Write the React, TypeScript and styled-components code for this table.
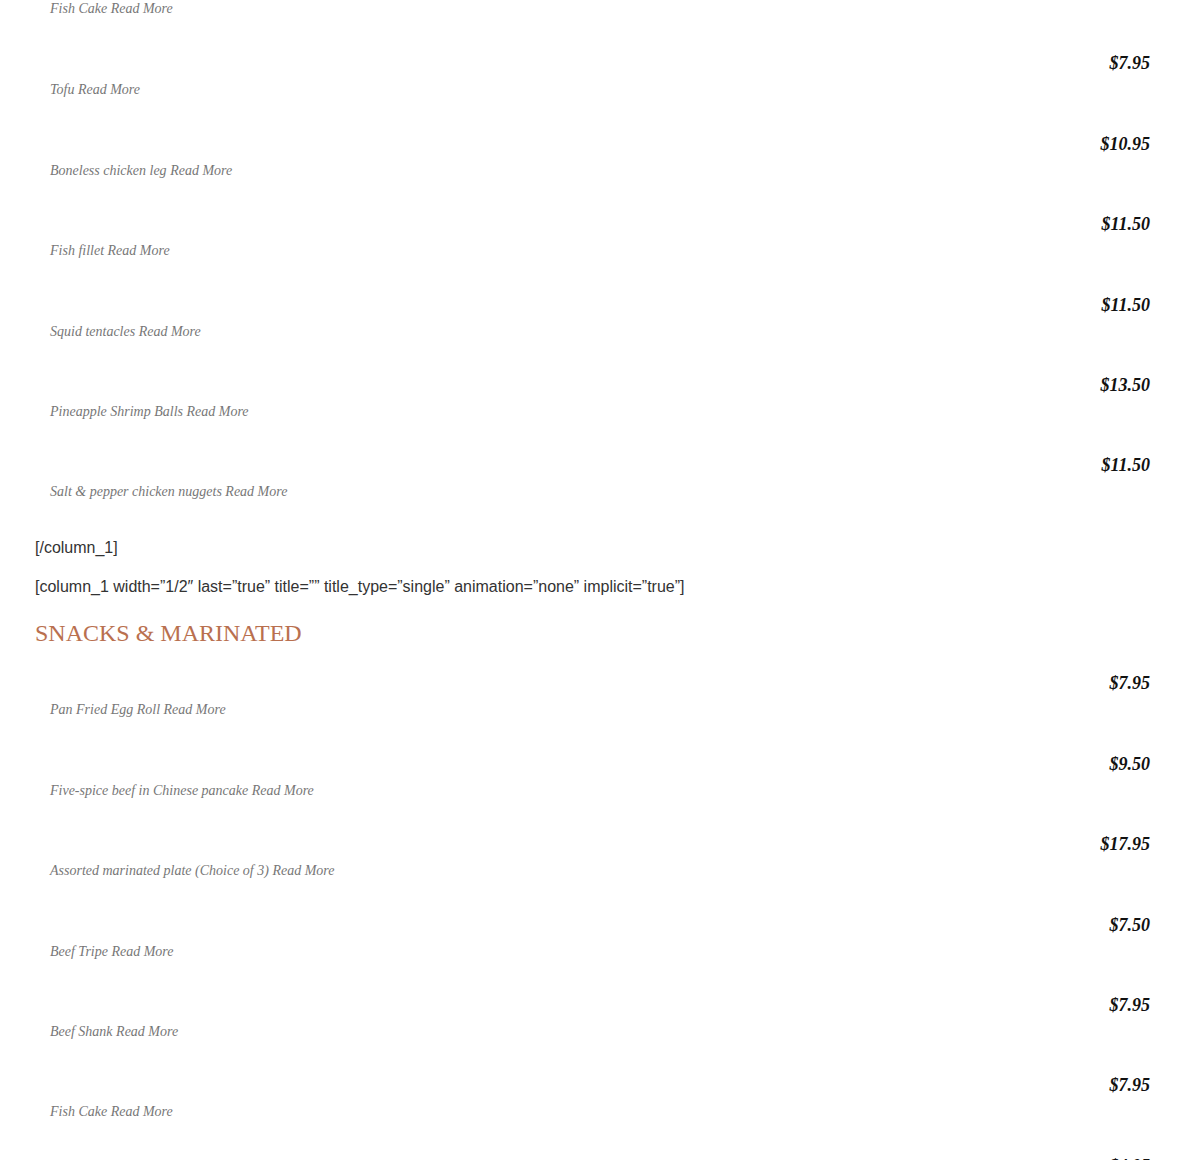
import React from "react";
import styled, { createGlobalStyle } from "styled-components";

const GlobalStyle = createGlobalStyle`
  html, body { margin: 0; padding: 0; background: #ffffff; }
  body { font-family: "Liberation Serif", serif; overflow: hidden; }
`;

const Page = styled.div`
  padding: 0 40px 0 35px;
  width: 1190px;
  box-sizing: border-box;
  height: 1160px;
  overflow: hidden;
`;

const List = styled.div`
  display: flex;
  flex-direction: column;
  gap: 31.4px;
`;

const Item = styled.div`
  display: flex;
  flex-direction: column;
`;

const Price = styled.div`
  text-align: right;
  font-family: "Liberation Serif", serif;
  font-style: italic;
  font-weight: 700;
  font-size: 18px;
  line-height: 24px;
  color: #111111;
`;

const Name = styled.div<{ $lead?: boolean }>`
  padding-left: 15px;
  margin-top: ${(p) => (p.$lead ? "-1px" : "5px")};
  margin-bottom: ${(p) => (p.$lead ? "1px" : "0")};
  font-family: "Liberation Serif", serif;
  font-style: italic;
  font-size: 14px;
  line-height: 20px;
  color: #777777;
`;

const Shortcode = styled.p<{ $top: number }>`
  margin: ${(p) => p.$top}px 0 0;
  font-family: "Liberation Sans", Arial, sans-serif;
  font-size: 16px;
  line-height: 24px;
  color: #333333;
`;

const Heading = styled.h2`
  margin: 19px 0 23px;
  font-family: "Liberation Serif", serif;
  font-weight: 400;
  font-size: 24px;
  line-height: 30px;
  color: #b9704f;
  text-transform: uppercase;
`;

type Dish = { name?: string; price: string };

const first: Dish[] = [
  { name: "Tofu", price: "$7.95" },
  { name: "Boneless chicken leg", price: "$10.95" },
  { name: "Fish fillet", price: "$11.50" },
  { name: "Squid tentacles", price: "$11.50" },
  { name: "Pineapple Shrimp Balls", price: "$13.50" },
  { name: "Salt & pepper chicken nuggets", price: "$11.50" },
];

const second: Dish[] = [
  { name: "Pan Fried Egg Roll", price: "$7.95" },
  { name: "Five-spice beef in Chinese pancake", price: "$9.50" },
  { name: "Assorted marinated plate (Choice of 3)", price: "$17.95" },
  { name: "Beef Tripe", price: "$7.50" },
  { name: "Beef Shank", price: "$7.95" },
  { name: "Fish Cake", price: "$7.95" },
  { price: "$4.95" },
];

const MenuItem = ({ d }: { d: Dish }) => (
  <Item>
    <Price>{d.price}</Price>
    {d.name && <Name>{d.name} Read More</Name>}
  </Item>
);

export default function App() {
  return (
    <>
      <GlobalStyle />
      <Page>
        <List>
          <Item>
            <Name $lead>Fish Cake Read More</Name>
          </Item>
          {first.map((d, i) => (
            <MenuItem key={i} d={d} />
          ))}
        </List>
        <Shortcode $top={34}>[/column_1]</Shortcode>
        <Shortcode $top={15}>
          [column_1 width=”1/2″ last=”true” title=”” title_type=”single” animation=”none” implicit=”true”]
        </Shortcode>
        <Heading>Snacks &amp; Marinated</Heading>
        <List>
          {second.map((d, i) => (
            <MenuItem key={i} d={d} />
          ))}
        </List>
      </Page>
    </>
  );
}
